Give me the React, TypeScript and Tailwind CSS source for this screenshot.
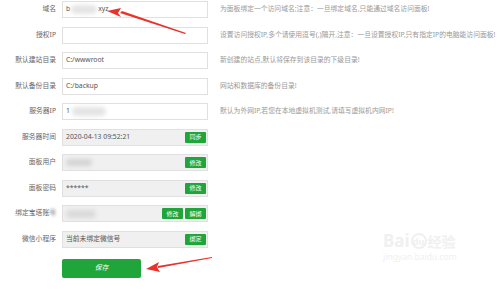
import { FunctionComponent, ReactNode } from "react";

const font = { fontFamily: '"Noto Sans", "Liberation Sans", "Noto Sans CJK SC", sans-serif' };

const Blur: FunctionComponent<{ className: string }> = ({ className }) => (
  <span className={`inline-block rounded-full blur-[2px] ${className}`} />
);

const Btn: FunctionComponent<{ children: ReactNode }> = ({ children }) => (
  <span className="flex h-[11px] w-[21px] items-center justify-center rounded-[1px] bg-[#20a53a] text-[6px] leading-none text-white">
    {children}
  </span>
);

const Row: FunctionComponent<{
  label: ReactNode;
  disabled?: boolean;
  desc?: string;
  children?: ReactNode;
  buttons?: ReactNode;
}> = ({ label, disabled, desc, children, buttons }) => (
  <div className="flex h-[17px] items-center">
    <div className="w-[56px] shrink-0 text-right text-[6.8px] text-[#666]">{label}</div>
    <div
      className={`ml-[6px] flex h-[17px] w-[146px] shrink-0 items-center border border-[#e0e0e0] pl-[3px] pr-[1px] text-[6.8px] text-[#555] ${
        disabled ? "bg-[#f0f0f0]" : "bg-white"
      }`}
    >
      <div className="flex min-w-0 flex-1 items-center">{children}</div>
      {buttons && <div className="flex gap-[2px]">{buttons}</div>}
    </div>
    {desc && (
      <div className="ml-[12px] whitespace-nowrap text-[6.8px] text-[#999]">{desc}</div>
    )}
  </div>
);

export default function App() {
  return (
    <div className="relative h-[289px] w-[500px] overflow-hidden bg-white" style={font}>
      <div className="flex flex-col gap-[8.5px] pt-[1px]">
        <Row label="域名" desc="为面板绑定一个访问域名;注意：一旦绑定域名,只能通过域名访问面板!">
          <span>b</span>
          <Blur className="mx-[1px] h-[9px] w-[26px] bg-[#e4e4e4]" />
          <span>xyz</span>
        </Row>
        <Row
          label="授权IP"
          desc="设置访问授权IP,多个请使用逗号(,)隔开,注意：一旦设置授权IP,只有指定IP的电脑能访问面板!"
        />
        <Row label="默认建站目录" desc="新创建的站点,默认将保存到该目录的下级目录!">
          C:/wwwroot
        </Row>
        <Row label="默认备份目录" desc="网站和数据库的备份目录!">
          C:/backup
        </Row>
        <Row label="服务器IP" desc="默认为外网IP,若您在本地虚拟机测试,请填写虚拟机内网IP!">
          <span>1</span>
          <Blur className="ml-[2px] h-[9px] w-[34px] bg-[#e4e4e4]" />
        </Row>
        <Row label="服务器时间" disabled buttons={<Btn>同步</Btn>}>
          2020-04-13 09:52:21
        </Row>
        <Row label="面板用户" disabled buttons={<Btn>修改</Btn>}>
          <Blur className="h-[7px] w-[26px] bg-[#d4d4d4]" />
        </Row>
        <Row label="面板密码" disabled buttons={<Btn>修改</Btn>}>
          ******
        </Row>
        <Row
          label={
            <span>
              绑定宝塔账<span className="blur-[1.5px]">号</span>
            </span>
          }
          disabled
          buttons={
            <>
              <Btn>修改</Btn>
              <Btn>解绑</Btn>
            </>
          }
        >
          <Blur className="h-[8px] w-[30px] bg-[#dadada]" />
        </Row>
        <Row label="微信小程序" disabled buttons={<Btn>绑定</Btn>}>
          当前未绑定微信号
        </Row>
        <div className="ml-[62px] mt-[2.5px]">
          <div className="flex h-[19px] w-[79px] items-center justify-center rounded-[2px] bg-[#20a53a] text-[6.8px] italic text-white">
            保存
          </div>
        </div>
      </div>

      {/* baidu watermark */}
      <div className="absolute left-[383px] top-[232px] flex flex-col items-start text-[#f0f0f0]">
        <div className="flex items-end">
          <span className="text-[17px] font-bold leading-none">Bai</span>
          <span className="relative mx-[1px] flex h-[16px] w-[16px] items-center justify-center rounded-full border-2 border-[#f0f0f0] text-[9px] font-bold leading-none">
            du
          </span>
          <span className="text-[14px] font-bold leading-none">经验</span>
        </div>
        <span className="mt-[4px] text-[8.5px] leading-none">jingyan.baidu.com</span>
      </div>

      {/* red arrows */}
      <svg className="absolute left-0 top-0" width="500" height="289" viewBox="0 0 500 289">
        <polygon points="185,34 120,13 122,11 186,33" fill="#e8322b" />
        <polygon points="107,11 121,8 118,13 121,17" fill="#e8322b" />
        <polygon points="212,257 158,266 158,268 212,258" fill="#e8322b" />
        <polygon points="146,269 159,262 157,267 160,272" fill="#e8322b" />
      </svg>
    </div>
  );
}
